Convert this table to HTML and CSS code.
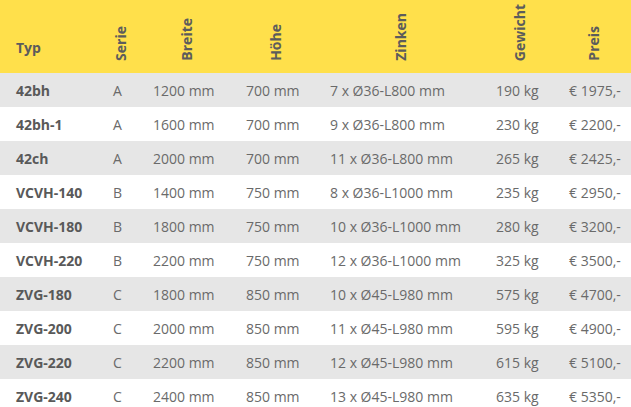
FILE: index.html
```html
<!DOCTYPE html>
<html lang="de">
<head>
<meta charset="utf-8">
<link rel="stylesheet" href="styles.css">
</head>
<body>
<table class="specs">
  <colgroup>
    <col class="c-typ"><col class="c-serie"><col class="c-breite"><col class="c-hoehe"><col class="c-zinken"><col class="c-gewicht"><col class="c-preis">
  </colgroup>
  <thead>
    <tr>
      <th class="h-typ">Typ</th>
      <th class="h-rot"><span>Serie</span></th>
      <th class="h-rot"><span>Breite</span></th>
      <th class="h-rot"><span>Höhe</span></th>
      <th class="h-rot"><span>Zinken</span></th>
      <th class="h-rot"><span>Gewicht</span></th>
      <th class="h-rot"><span>Preis</span></th>
    </tr>
  </thead>
  <tbody>
    <tr><td class="typ">42bh</td><td>A</td><td>1200 mm</td><td>700 mm</td><td>7 x Ø36-L800 mm</td><td>190 kg</td><td>€ 1975,-</td></tr>
    <tr><td class="typ">42bh-1</td><td>A</td><td>1600 mm</td><td>700 mm</td><td>9 x Ø36-L800 mm</td><td>230 kg</td><td>€ 2200,-</td></tr>
    <tr><td class="typ">42ch</td><td>A</td><td>2000 mm</td><td>700 mm</td><td>11 x Ø36-L800 mm</td><td>265 kg</td><td>€ 2425,-</td></tr>
    <tr><td class="typ">VCVH-140</td><td>B</td><td>1400 mm</td><td>750 mm</td><td>8 x Ø36-L1000 mm</td><td>235 kg</td><td>€ 2950,-</td></tr>
    <tr><td class="typ">VCVH-180</td><td>B</td><td>1800 mm</td><td>750 mm</td><td>10 x Ø36-L1000 mm</td><td>280 kg</td><td>€ 3200,-</td></tr>
    <tr><td class="typ">VCVH-220</td><td>B</td><td>2200 mm</td><td>750 mm</td><td>12 x Ø36-L1000 mm</td><td>325 kg</td><td>€ 3500,-</td></tr>
    <tr><td class="typ">ZVG-180</td><td>C</td><td>1800 mm</td><td>850 mm</td><td>10 x Ø45-L980 mm</td><td>575 kg</td><td>€ 4700,-</td></tr>
    <tr><td class="typ">ZVG-200</td><td>C</td><td>2000 mm</td><td>850 mm</td><td>11 x Ø45-L980 mm</td><td>595 kg</td><td>€ 4900,-</td></tr>
    <tr><td class="typ">ZVG-220</td><td>C</td><td>2200 mm</td><td>850 mm</td><td>12 x Ø45-L980 mm</td><td>615 kg</td><td>€ 5100,-</td></tr>
    <tr><td class="typ">ZVG-240</td><td>C</td><td>2400 mm</td><td>850 mm</td><td>13 x Ø45-L980 mm</td><td>635 kg</td><td>€ 5350,-</td></tr>
  </tbody>
</table>
</body>
</html>
```
FILE: styles.css
```css
html, body {
  margin: 0;
  padding: 0;
  background: #ffffff;
}
body {
  font-family: "Open Sans", "DejaVu Sans", sans-serif;
  font-size: 14px;
  color: #6a6a6a;
}
.specs {
  width: 631px;
  border-collapse: collapse;
  table-layout: fixed;
}
.c-typ { width: 100px; }
.c-serie { width: 40px; }
.c-breite { width: 93px; }
.c-hoehe { width: 84px; }
.c-zinken { width: 166px; }
.c-gewicht { width: 73px; }
.c-preis { width: 75px; }

.specs thead tr {
  background: #ffe04b;
  height: 73px;
}
.specs th {
  padding: 0;
  font-weight: 700;
  color: #5c5c5c;
  vertical-align: bottom;
}
.h-typ {
  text-align: left;
  padding-left: 16px !important;
  padding-bottom: 16px !important;
  line-height: 19px;
}
.h-rot {
  text-align: center;
  padding-bottom: 8px !important;
}
.h-rot span {
  display: inline-block;
  writing-mode: vertical-rl;
  transform: rotate(180deg);
  line-height: 19px;
}
.specs tbody tr {
  height: 34px;
}
.specs tbody tr:nth-child(odd) {
  background: #e6e6e6;
}
.specs td {
  padding: 0 0 0 13px;
  line-height: 19px;
  vertical-align: middle;
  white-space: nowrap;
}
.specs td.typ {
  padding-left: 16px;
  font-weight: 700;
  color: #595959;
}
```
